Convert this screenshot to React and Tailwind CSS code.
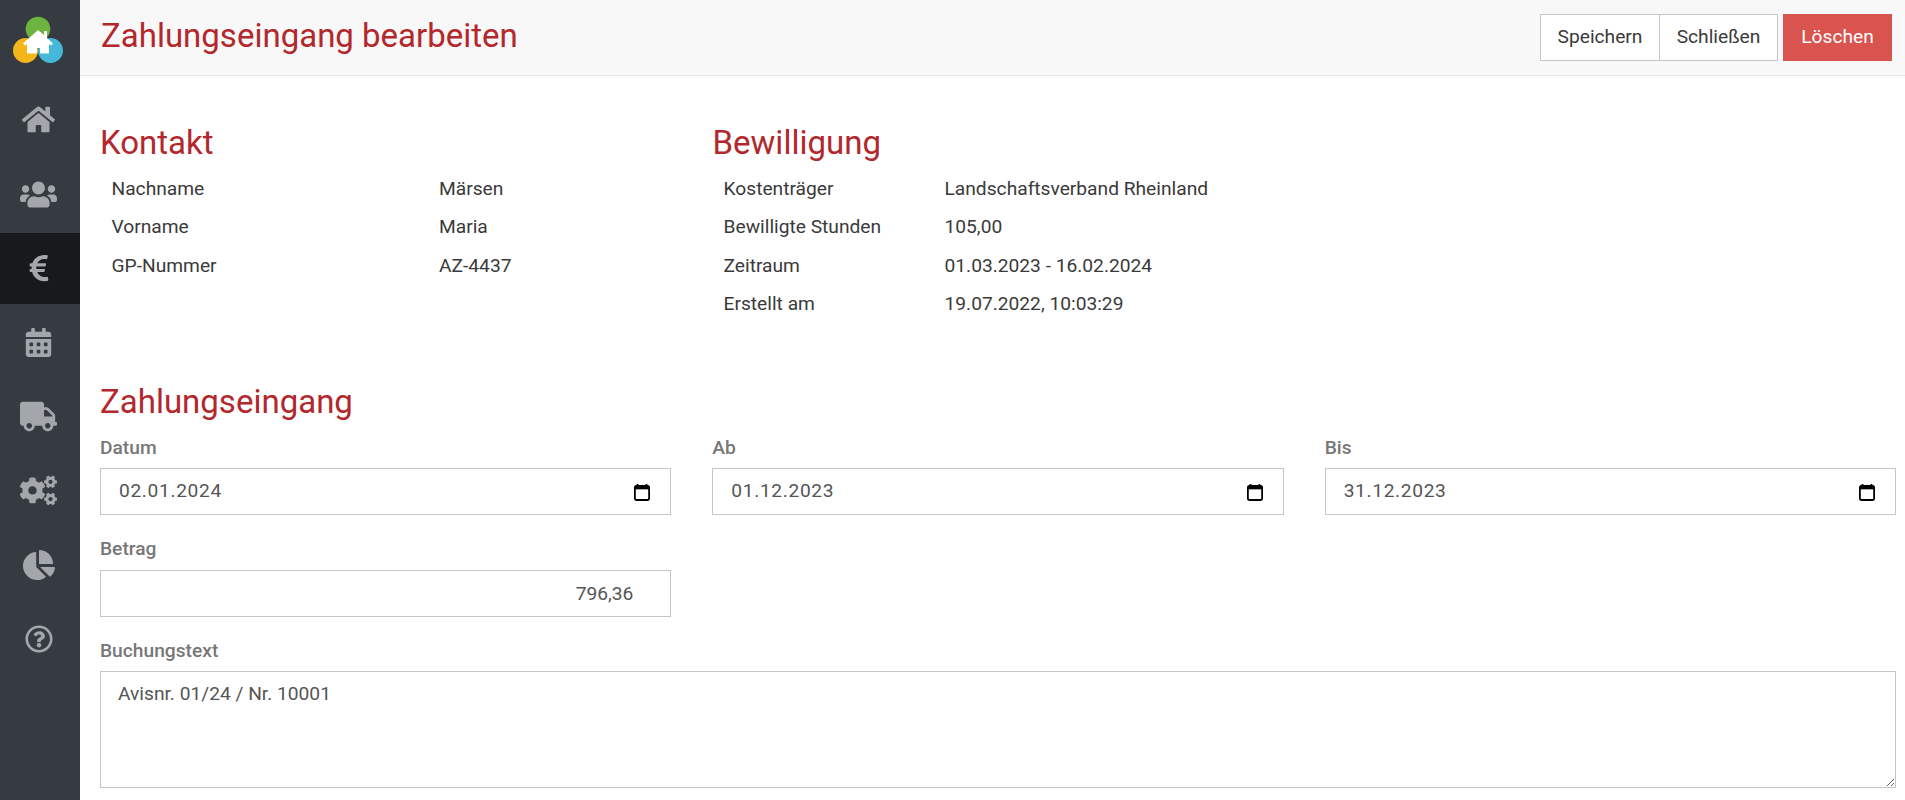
import React from "react";
import { FaHome, FaUsers, FaEuroSign, FaCalendarAlt, FaTruck, FaCogs, FaChartPie, FaRegQuestionCircle } from "react-icons/fa";

const nav = [
  { I: FaHome, s: 33, c: "-mt-[2px]" },
  { I: FaUsers, s: 37, c: "" },
  { I: FaEuroSign, s: 30, active: true, c: "" },
  { I: FaCalendarAlt, s: 29, c: "" },
  { I: FaTruck, s: 37, c: "" },
  { I: FaCogs, s: 37, c: "" },
  { I: FaChartPie, s: 32, c: "" },
  { I: FaRegQuestionCircle, s: 28, c: "" },
];

function Logo() {
  return (
    <svg width="80" height="80" viewBox="0 0 80 80" className="block">
      <circle cx="38" cy="29" r="12.3" fill="#6cb33f" />
      <circle cx="25.5" cy="50.5" r="12.5" fill="#f2b61b" />
      <circle cx="50.5" cy="50.5" r="12.5" fill="#45b8da" />
      <path d="M38 30 L44 35 L44 31 L47 31 L47 38 L53 43.5 L51 45.5 L49 44 L49 53.5 L40 53.5 L40 48 L37 48 L37 53.5 L27 53.5 L27 44 L25 45.5 L23 43.5 Z" fill="#fff" />
    </svg>
  );
}

function InfoRow({ label, value, w }) {
  return (
    <div className="flex h-[38.5px] items-center">
      <div className={w}>{label}</div>
      <div>{value}</div>
    </div>
  );
}

function DateField({ label, value }) {
  return (
    <div>
      <label className="mt-[1px] block text-[19.2px] leading-[26px] font-medium text-[#777]">{label}</label>
      <div className="mt-[7px] flex h-[47px] items-center border border-[#c6c6c6] bg-white pl-[18px] pr-[19px]">
        <input readOnly value={value} className="min-w-0 flex-1 bg-transparent text-[19.2px] tracking-[0.65px] text-[#555] outline-none" />
        <svg width="16" height="18" viewBox="0 0 18 20" className="mt-[1px] mr-[1px]">
          <path d="M4 1v2M14 1v2" stroke="#000" strokeWidth="2" />
          <rect x="1" y="3" width="16" height="16" rx="2" fill="none" stroke="#000" strokeWidth="2" />
          <rect x="1" y="3" width="16" height="4" fill="#000" />
        </svg>
      </div>
    </div>
  );
}

export default function App() {
  return (
    <div className="flex h-[800px] overflow-hidden bg-white font-['Roboto',sans-serif] text-[19.2px] text-[#3a3a3a]">
      <aside className="flex w-[80px] shrink-0 flex-col bg-[#363b42]">
        <div className="h-[84.5px]">
          <Logo />
        </div>
        <nav className="flex flex-col gap-[3.2px]">
          {nav.map(({ I, s, active, c }, i) => (
            <div key={i} className={`flex h-[71px] items-center justify-center pr-[3px] text-[#a3a6aa] ${active ? "bg-[#17191d]" : ""}`}>
              <I size={s} className={c} />
            </div>
          ))}
        </nav>
      </aside>
      <main className="min-w-0 flex-1">
        <header className="flex h-[76px] items-center justify-between border-b border-[#e7e7e7] bg-[#f8f8f8] pl-[21px] pr-[13px]">
          <h1 className="-mt-[3px] text-[33px] font-normal text-[#b2282d]">Zahlungseingang bearbeiten</h1>
          <div className="flex">
            <button className="h-[47px] w-[120px] border border-[#c6c6c6] bg-white">Speichern</button>
            <button className="-ml-[1px] h-[47px] w-[119px] border border-[#c6c6c6] bg-white">Schließen</button>
            <button className="ml-[5px] h-[47px] w-[109px] bg-[#d9534f] text-white">Löschen</button>
          </div>
        </header>
        <div className="px-[20px] pt-[45px] pr-[9px]">
          <div className="flex">
            <section className="w-[612.5px]">
              <h2 className="text-[33px] leading-[44px] font-normal text-[#b2282d]">Kontakt</h2>
              <div className="mt-[5px] pl-[11.5px]">
                <InfoRow label="Nachname" value="Märsen" w="w-[327.5px]" />
                <InfoRow label="Vorname" value="Maria" w="w-[327.5px]" />
                <InfoRow label="GP-Nummer" value="AZ-4437" w="w-[327.5px]" />
              </div>
            </section>
            <section>
              <h2 className="text-[33px] leading-[44px] font-normal text-[#b2282d]">Bewilligung</h2>
              <div className="mt-[5px] pl-[11px]">
                <InfoRow label="Kostenträger" value="Landschaftsverband Rheinland" w="w-[221px]" />
                <InfoRow label="Bewilligte Stunden" value="105,00" w="w-[221px]" />
                <InfoRow label="Zeitraum" value="01.03.2023 - 16.02.2024" w="w-[221px]" />
                <InfoRow label="Erstellt am" value="19.07.2022, 10:03:29" w="w-[221px]" />
              </div>
            </section>
          </div>
          <h2 className="mt-[56px] text-[33px] leading-[44px] font-normal text-[#b2282d]">Zahlungseingang</h2>
          <div className="mt-[10px] grid grid-cols-3 gap-x-[41px]">
            <DateField label="Datum" value="02.01.2024" />
            <DateField label="Ab" value="01.12.2023" />
            <DateField label="Bis" value="31.12.2023" />
          </div>
          <div className="mt-[21px] grid grid-cols-3 gap-x-[41px]">
            <div>
              <label className="block text-[19.2px] leading-[26px] font-medium text-[#777]">Betrag</label>
              <input readOnly value="796,36" className="mt-[7.5px] block h-[47px] w-full border border-[#c6c6c6] bg-white pr-[37px] text-right text-[19.2px] text-[#555] outline-none" />
            </div>
          </div>
          <div className="mt-[21px]">
            <label className="block text-[19.2px] leading-[26px] font-medium text-[#777]">Buchungstext</label>
            <textarea readOnly value="Avisnr. 01/24 / Nr. 10001" className="mt-[7px] block h-[117px] w-full border border-[#c6c6c6] bg-white px-[17px] py-[8px] text-[19.2px] text-[#555] outline-none" />
          </div>
        </div>
      </main>
    </div>
  );
}
